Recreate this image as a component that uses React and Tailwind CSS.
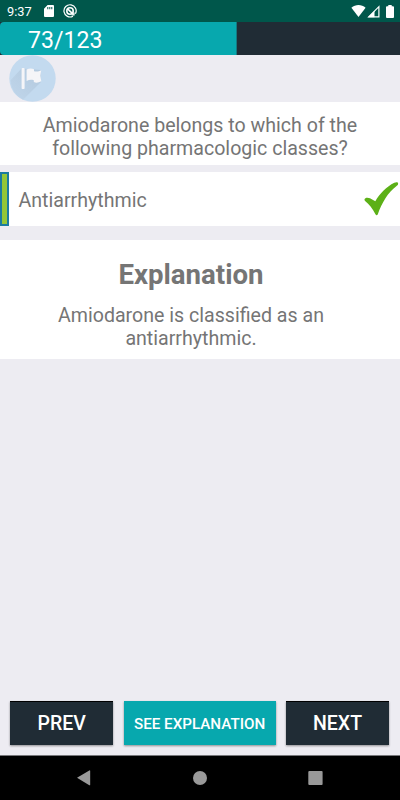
import React, { useState } from "react";

const TOTAL_QUESTIONS = 123;

const QUESTION = {
  number: 73,
  text: ["Amiodarone belongs to which of the", "following pharmacologic classes?"],
  answer: "Antiarrhythmic",
  explanation: ["Amiodarone is classified as an", "antiarrhythmic."],
};

// Android status bar
const StatusBar = () => (
  <div className="h-[22px] shrink-0 bg-[#00574b] text-white flex items-center justify-between pl-[7px] pr-[6px]">
    <div className="flex items-center">
      <span className="w-[37px] text-[12.8px] leading-none pt-[2px]">9:37</span>
      <svg className="w-[10px] h-[12px]" viewBox="0 0 10 12">
        <path
          fill="#fff"
          fillRule="evenodd"
          d="M3.6 0H9a1 1 0 0 1 1 1v10a1 1 0 0 1-1 1H1a1 1 0 0 1-1-1V3.7ZM3.3 2v2.2h1V2Zm2 0v2.2h1V2Zm2 0v2.2h1V2Z"
        />
      </svg>
      <svg className="w-[14px] h-[14px] ml-[9px]" viewBox="0 0 14 14" fill="none" stroke="#fff">
        <path strokeWidth="1.2" d="M10 12.2A6.1 6.1 0 1 1 12.4 9.8" />
        <circle cx="7" cy="7" r="3.2" strokeWidth="1.6" />
        <path strokeWidth="1.6" d="m4.6 4.8 6 5.8" />
        <path strokeWidth="1.2" d="M8.6 11h2.4V8.6" />
      </svg>
    </div>
    <div className="flex items-center">
      <svg className="w-[15px] h-[12px]" viewBox="0 0 15 12">
        <path fill="#fff" d="M.4 2.8C4.5-.8 10.5-.8 14.6 2.8L7.5 12Z" />
      </svg>
      <svg className="w-[13px] h-[13px] ml-px" viewBox="0 0 13 13">
        <path fill="none" stroke="#fff" strokeWidth="1.2" d="M1.7 11.9H11.9V1.6Z" />
        <path fill="#fff" d="M1 12.3 7.5 5.7v6.6Z" />
      </svg>
      <svg className="w-[8px] h-[13px] ml-[6px]" viewBox="0 0 8 13">
        <path fill="#fff" d="M2.3 0h3.4v1.2H7a1 1 0 0 1 1 1V12a1 1 0 0 1-1 1H1a1 1 0 0 1-1-1V2.2a1 1 0 0 1 1-1h1.3Z" />
      </svg>
    </div>
  </div>
);

// Quiz progress, filled up to the current question
const ProgressBar = ({ current, total }) => (
  <div className="h-[33px] shrink-0 bg-[#202c35]">
    <div
      className="h-full bg-[#07a8ae] rounded-l-[4px] border-r border-[#147980] pl-[28px] text-white text-[23.1px] leading-[37px]"
      style={{ width: `${(current / total) * 100}%` }}
    >
      {current}/{total}
    </div>
  </div>
);

const FlagButton = ({ onClick }) => (
  <button onClick={onClick} className="block ml-[9px] w-[47px] h-[47px]">
    <svg className="w-full h-full" viewBox="0 0 47 47">
      <defs>
        <linearGradient id="flagShadow" x1="1" y1="0" x2="0" y2="1">
          <stop offset="0" stopColor="#b3c9de" />
          <stop offset="1" stopColor="#c0d6eb" />
        </linearGradient>
      </defs>
      <circle cx="23.5" cy="23.5" r="23.2" fill="#c3daef" />
      <path
        fill="url(#flagShadow)"
        d="M12.5 13.5 1.6 25.2A23.2 23.2 0 0 0 14 44.7L32 27V15Z"
      />
      <rect x="12.6" y="13" width="3" height="21" rx="0.8" fill="#f5f5f8" />
      <path
        fill="#f5f5f8"
        d="M17.6 14.5C20 13.2 22.8 13.2 25 14.2V16.2C27.3 16.9 30 16.6 32.2 15.2L31.4 20.7 32.3 26.2C29.5 27.8 27 28.1 24.8 27.1V25.3C22.3 24.5 20.2 24.7 17.6 26Z"
      />
    </svg>
  </button>
);

const CheckMark = () => (
  <svg className="w-[35px] h-[34px]" viewBox="0 0 35 34">
    <path
      fill="#5cb017"
      d="M.5 17.4C.8 15.4 4 15.3 6 16.3L11.3 19.2C16 11.6 22.5 4.6 30.3 .8C32.5-.1 34.4 .2 34.1 2C34 3 33.2 3.5 32 4.4C24 10.5 18 20.4 13.9 32C13.3 33.8 12.2 33.8 11.3 32C8.7 26.8 5.3 22.3 1.1 19C.4 18.4 .4 18 .5 17.4Z"
    />
  </svg>
);

const Lines = ({ lines }) =>
  lines.map((line) => (
    <span key={line} className="block whitespace-nowrap">
      {line}
    </span>
  ));

const NavButton = ({ children, onClick }) => (
  <button
    onClick={onClick}
    className="w-[102.5px] h-[44px] bg-[#202c35] border-t border-t-black text-white text-[19.5px] font-medium shadow-[0_1px_2px_rgba(0,0,0,0.4)]"
  >
    {children}
  </button>
);

// Android system navigation
const SystemNav = () => (
  <div className="h-[45px] shrink-0 bg-black border-t border-[#77777a]">
    <svg className="w-full h-[44px]" viewBox="0 0 400 44" fill="#999">
      <path d="M77 21.8 89.3 14.4q.9-.4.9.5v13.8q0 .9-.9.5Z" />
      <circle cx="200" cy="22" r="7" />
      <rect x="308.3" y="15" width="14.3" height="14" rx="1" />
    </svg>
  </div>
);

const QuizScreen = () => {
  const [number, setNumber] = useState(QUESTION.number);
  const [flagged, setFlagged] = useState(false);
  const [showExplanation, setShowExplanation] = useState(true);

  return (
    <div className="w-[400px] h-[800px] flex flex-col overflow-hidden bg-[#edecf2] text-[#757575] font-['Roboto',sans-serif]">
      <StatusBar />
      <ProgressBar current={number} total={TOTAL_QUESTIONS} />

      <div className="flex-1 flex flex-col">
        <div className="h-[47px]">
          <FlagButton onClick={() => setFlagged(!flagged)} />
        </div>

        {/* Question */}
        <div className="h-[63px] bg-white pt-[12px] text-center text-[19.6px] leading-[23px]">
          <Lines lines={QUESTION.text} />
        </div>

        {/* Answer */}
        <div className="mt-[7px] h-[54px] bg-white flex items-center">
          <div className="w-[9px] h-full bg-[#93c737] border-2 border-[#1b7ca0]" />
          <span className="ml-[9.5px] pt-[3px] flex-1 text-[19.6px]">{QUESTION.answer}</span>
          <div className="mr-px">
            <CheckMark />
          </div>
        </div>

        {/* Explanation */}
        {showExplanation && (
          <div className="mt-[14px] h-[119px] bg-white pt-[19px] pr-[18px] text-center">
            <h2 className="text-[27.6px] leading-[32px] font-bold">Explanation</h2>
            <p className="mt-[13px] text-[19.6px] leading-[23px]">
              <Lines lines={QUESTION.explanation} />
            </p>
          </div>
        )}

        {/* Buttons */}
        <div className="mt-auto mb-[10px] flex pl-[10.4px] gap-[10.7px]">
          <NavButton onClick={() => setNumber(Math.max(1, number - 1))}>PREV</NavButton>
          <button
            onClick={() => setShowExplanation(!showExplanation)}
            className="w-[152px] h-[44px] pt-[2px] bg-[#07a8ae] text-white text-[15.2px] font-medium whitespace-nowrap shadow-[0_1px_2px_rgba(0,0,0,0.4)]"
          >
            SEE EXPLANATION
          </button>
          <NavButton onClick={() => setNumber(Math.min(TOTAL_QUESTIONS, number + 1))}>NEXT</NavButton>
        </div>
      </div>

      <SystemNav />
    </div>
  );
};

export default QuizScreen;
